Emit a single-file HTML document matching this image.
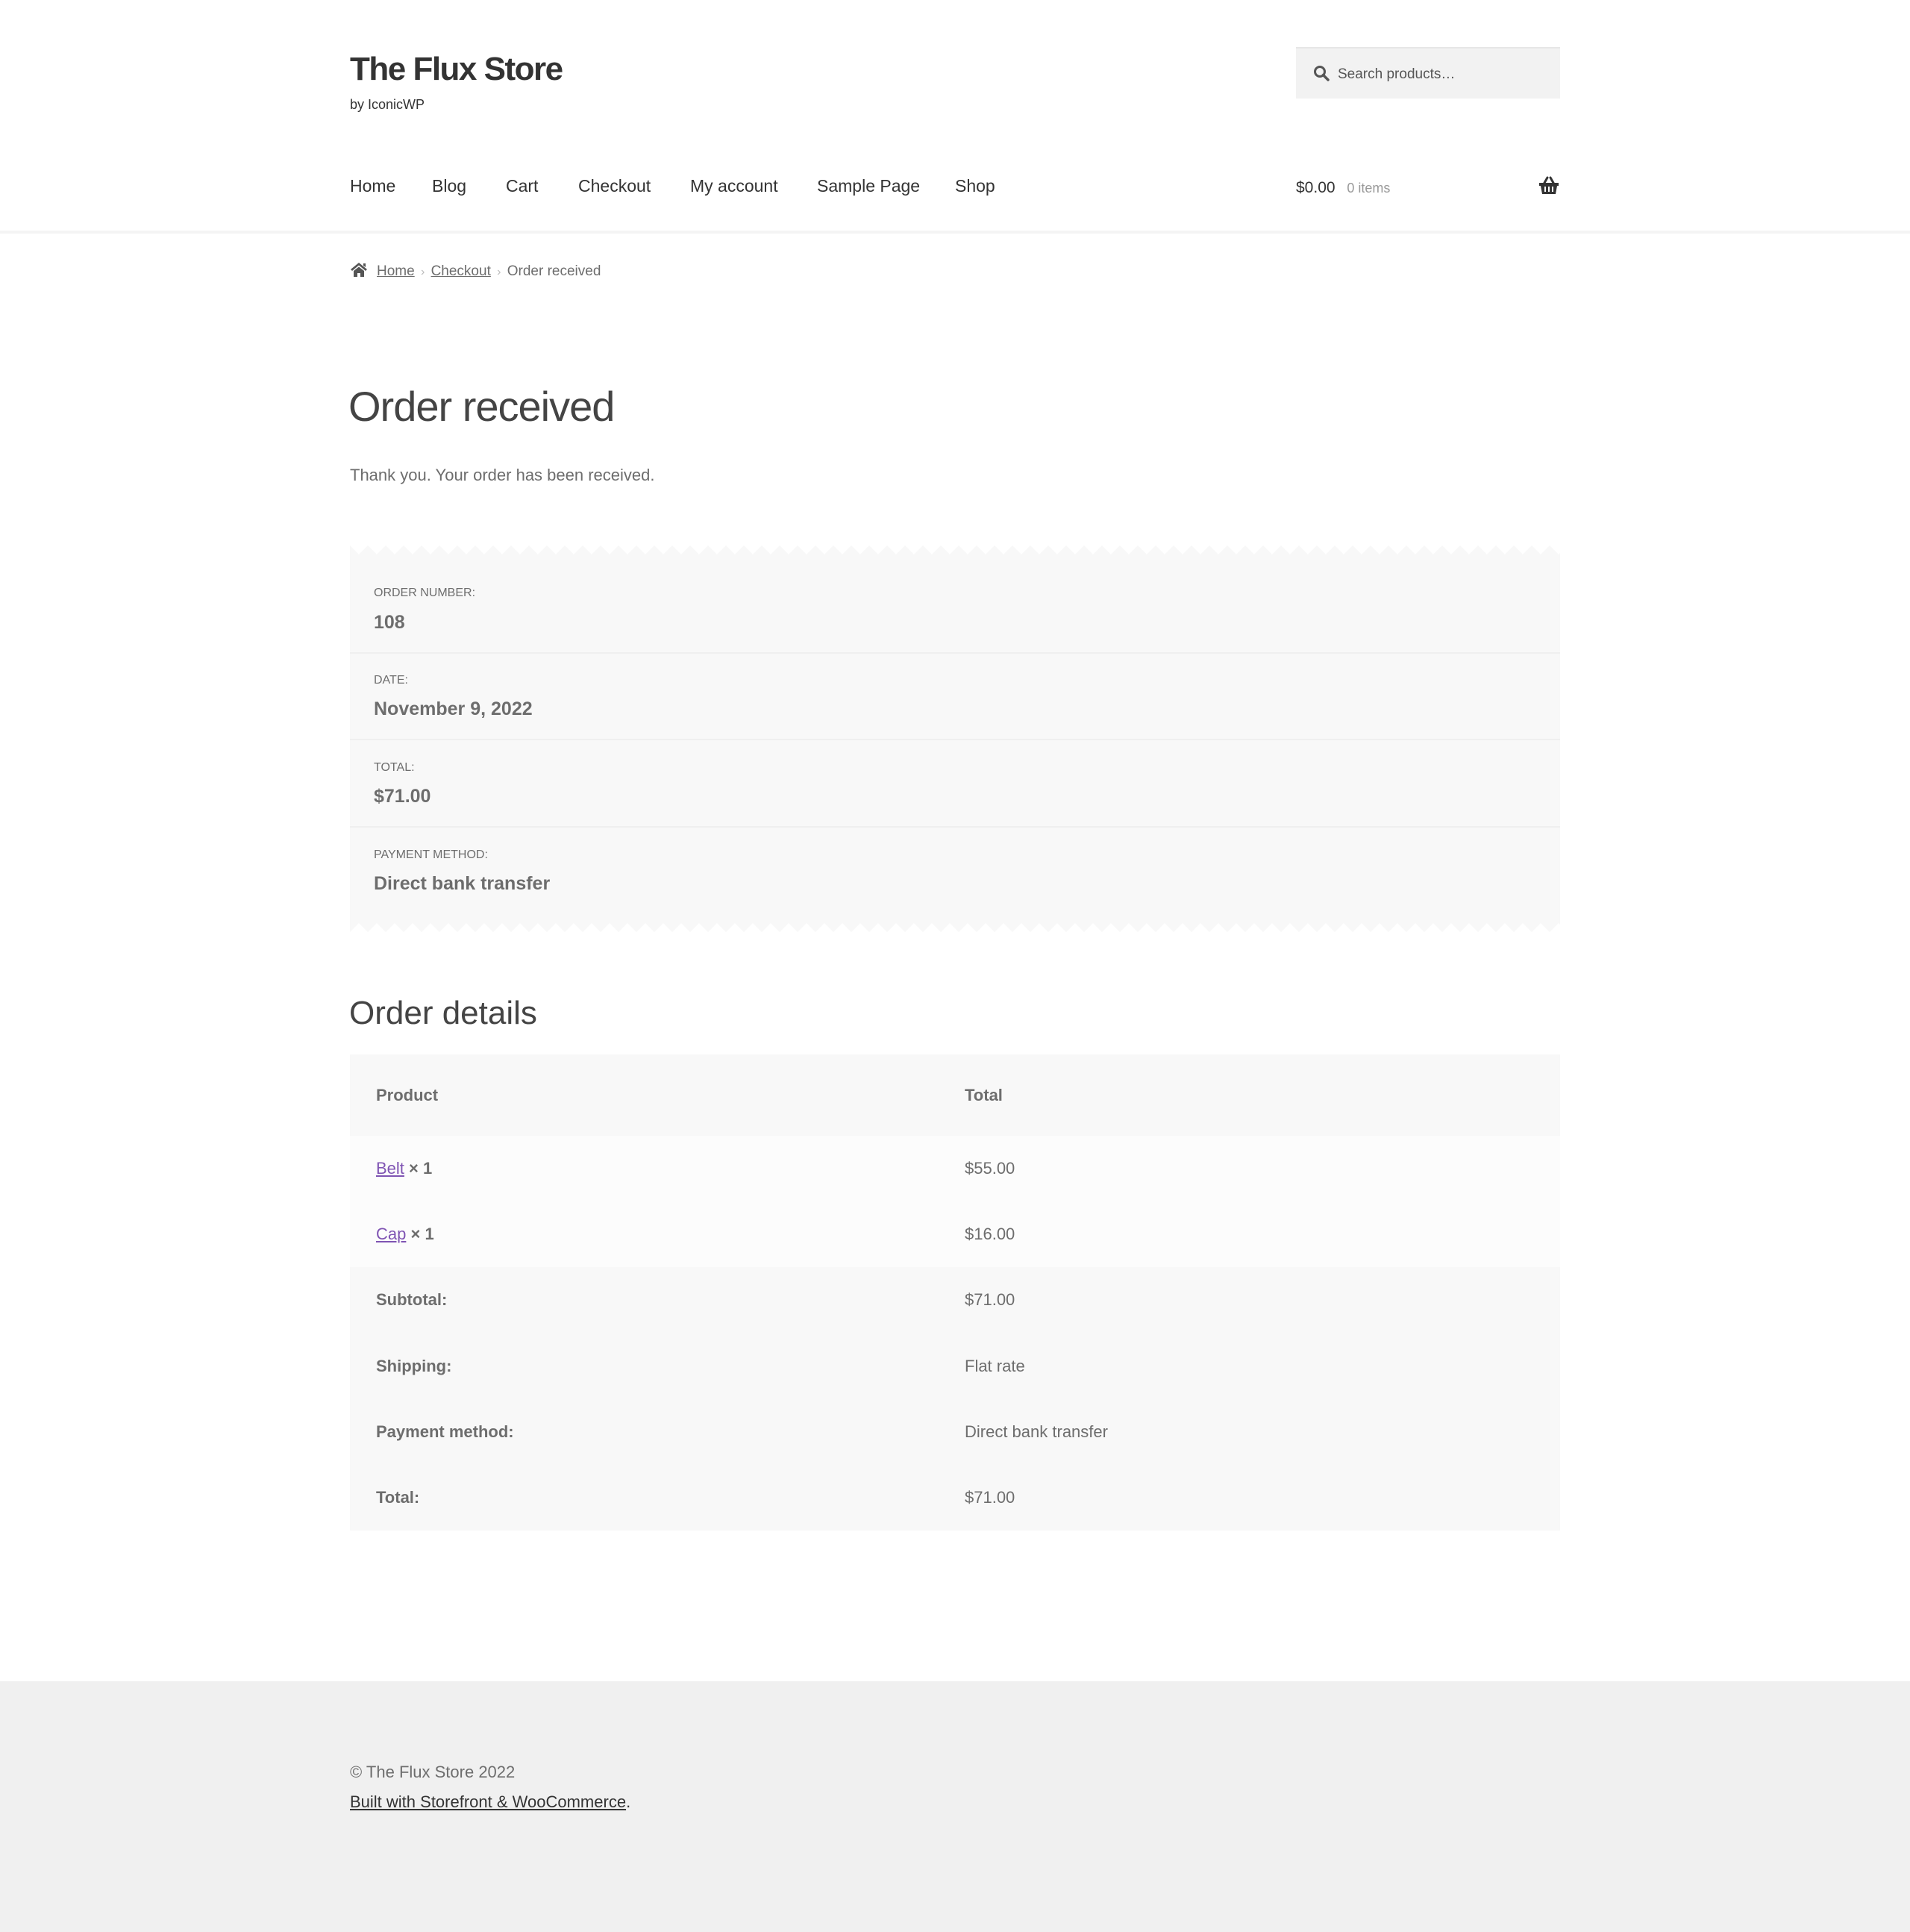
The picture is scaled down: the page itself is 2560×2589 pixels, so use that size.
<!DOCTYPE html>
<html><head><meta charset="utf-8"><style>
*{margin:0;padding:0;box-sizing:border-box}
html,body{width:2560px;height:2589px;background:#fff;font-family:"Liberation Sans",sans-serif;color:#6d6d6d;overflow:hidden}
.a{position:absolute;white-space:nowrap}
.hr{position:absolute;left:0;width:2560px;height:4px;background:#f4f4f4;top:309px}
.nav span{position:absolute;top:235px;font-size:23px;color:#333;line-height:28px}
.lab{font-size:16px;color:#6d6d6d;text-transform:uppercase}
.val{font-size:25px;font-weight:bold;color:#6d6d6d}
.row{position:absolute;left:469px;width:1622px}
.tc{position:absolute;font-size:22px;line-height:28px}
</style></head><body>
<div class="a" style="left:469px;top:65px;font-size:44px;font-weight:bold;color:#333;letter-spacing:-1.5px;line-height:56px">The Flux Store</div>
<div class="a" style="left:469px;top:128px;font-size:18px;color:#333;line-height:24px">by IconicWP</div>

<div class="a" style="left:1737px;top:63px;width:354px;height:69px;background:#f2f2f2;border-top:2px solid #e6e6e6"></div>
<svg class="a" style="left:1760px;top:87px" width="22" height="22" viewBox="0 0 22 22"><circle cx="9" cy="9" r="6.5" fill="none" stroke="#555" stroke-width="3"/><line x1="13.5" y1="13.5" x2="20" y2="20" stroke="#555" stroke-width="3.5" stroke-linecap="round"/></svg>
<div class="a" style="left:1793px;top:87px;font-size:19px;color:#555;line-height:26px">Search products…</div>

<div class="nav">
<span style="left:469px">Home</span>
<span style="left:579px">Blog</span>
<span style="left:678px">Cart</span>
<span style="left:775px">Checkout</span>
<span style="left:925px">My account</span>
<span style="left:1095px">Sample Page</span>
<span style="left:1280px">Shop</span>
</div>
<div class="a" style="left:1737px;top:238px;font-size:21px;color:#333;line-height:28px">$0.00 <span style="font-size:18px;color:#999;margin-left:10px">0 items</span></div>
<svg class="a" style="left:2062px;top:236px" width="28" height="26" viewBox="0 0 28 26"><path d="M8 9 L12 2 M20 9 L16 2" stroke="#333" stroke-width="3" stroke-linecap="round"/><path d="M1 9 H27 V13 H25 L23 24 H5 L3 13 H1 Z" fill="#333"/><path d="M9 14 V21 M14 14 V21 M19 14 V21" stroke="#fff" stroke-width="2"/></svg>
<div class="hr"></div>

<svg class="a" style="left:469px;top:351px" width="24" height="21" viewBox="0 0 24 21"><path d="M12 1 L1 10 L3 12 L12 4.5 L21 12 L23 10 Z" fill="#555"/><path d="M18 2 H21 V7 L18 5 Z" fill="#555"/><path d="M5 12 L12 6.5 L19 12 V20 H14 V15 H10 V20 H5 Z" fill="#555"/></svg>
<div class="a" style="left:505px;top:351px;font-size:19px;line-height:26px;color:#6d6d6d"><u>Home</u> <span style="color:#bbb;font-size:16px;margin:0 3px">›</span> <u>Checkout</u> <span style="color:#bbb;font-size:16px;margin:0 3px">›</span> Order received</div>

<div class="a" style="left:467px;top:505px;font-size:56px;color:#444;line-height:80px;letter-spacing:-1px">Order received</div>
<div class="a" style="left:469px;top:623px;font-size:22px;line-height:28px">Thank you. Your order has been received.</div>

<svg class="a" style="left:469px;top:731px" width="1622" height="12"><defs><pattern id="z" width="24" height="12" patternUnits="userSpaceOnUse"><polygon points="0,0 12,12 24,0 24,12 0,12" fill="#f8f8f8"/></pattern></defs><rect width="1622" height="12" fill="url(#z)"/></svg>
<div class="a" style="left:469px;top:743px;width:1622px;height:494px;background:#f8f8f8"></div>
<svg class="a" style="left:469px;top:1237px" width="1622" height="12"><defs><pattern id="z2" width="24" height="12" patternUnits="userSpaceOnUse"><polygon points="0,0 24,0 24,12 12,0 0,12" fill="#f8f8f8"/></pattern></defs><rect width="1622" height="12" fill="url(#z2)"/></svg>
<div class="row" style="top:874px;height:2px;background:#efefef"></div>
<div class="row" style="top:990px;height:2px;background:#efefef"></div>
<div class="row" style="top:1107px;height:2px;background:#efefef"></div>

<div class="a lab" style="left:501px;top:786px">Order number:</div>
<div class="a val" style="left:501px;top:820px">108</div>
<div class="a lab" style="left:501px;top:903px">Date:</div>
<div class="a val" style="left:501px;top:936px">November 9, 2022</div>
<div class="a lab" style="left:501px;top:1020px">Total:</div>
<div class="a val" style="left:501px;top:1053px">$71.00</div>
<div class="a lab" style="left:501px;top:1137px">Payment method:</div>
<div class="a val" style="left:501px;top:1170px">Direct bank transfer</div>

<div class="a" style="left:468px;top:1326px;font-size:44px;color:#444;line-height:64px">Order details</div>

<div class="row" style="top:1413px;height:109px;background:#f8f8f8"></div>
<div class="row" style="top:1522px;height:176px;background:#fcfcfc"></div>
<div class="row" style="top:1698px;height:353px;background:#f8f8f8"></div>

<div class="tc" style="left:504px;top:1454px;font-weight:bold">Product</div>
<div class="tc" style="left:1293px;top:1454px;font-weight:bold">Total</div>
<div class="tc" style="left:504px;top:1552px"><u style="color:#7f54b3">Belt</u> <b>× 1</b></div>
<div class="tc" style="left:1293px;top:1552px">$55.00</div>
<div class="tc" style="left:504px;top:1640px"><u style="color:#7f54b3">Cap</u> <b>× 1</b></div>
<div class="tc" style="left:1293px;top:1640px">$16.00</div>
<div class="tc" style="left:504px;top:1728px;font-weight:bold">Subtotal:</div>
<div class="tc" style="left:1293px;top:1728px">$71.00</div>
<div class="tc" style="left:504px;top:1817px;font-weight:bold">Shipping:</div>
<div class="tc" style="left:1293px;top:1817px">Flat rate</div>
<div class="tc" style="left:504px;top:1905px;font-weight:bold">Payment method:</div>
<div class="tc" style="left:1293px;top:1905px">Direct bank transfer</div>
<div class="tc" style="left:504px;top:1993px;font-weight:bold">Total:</div>
<div class="tc" style="left:1293px;top:1993px">$71.00</div>

<div class="a" style="left:0;top:2253px;width:2560px;height:336px;background:#f0f0f0"></div>
<div class="a" style="left:469px;top:2360px;font-size:22px;line-height:30px;color:#6d6d6d">© The Flux Store 2022</div>
<div class="a" style="left:469px;top:2400px;font-size:22px;line-height:30px;color:#333"><u>Built with Storefront &amp; WooCommerce</u>.</div>
</body></html>
